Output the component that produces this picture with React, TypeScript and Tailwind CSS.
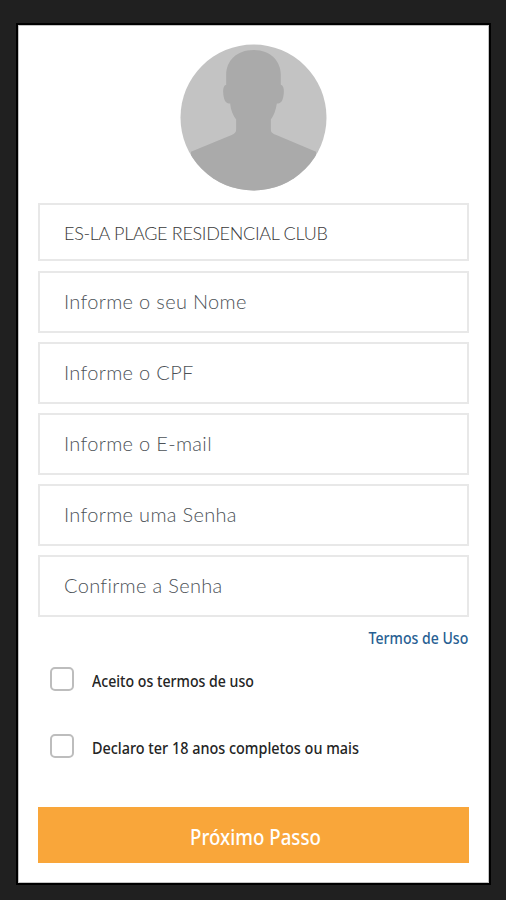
import { useState } from "react";

const fields = [
  { name: "nome", placeholder: "Informe o seu Nome", type: "text" },
  { name: "cpf", placeholder: "Informe o CPF", type: "text" },
  { name: "email", placeholder: "Informe o E-mail", type: "email" },
  { name: "senha", placeholder: "Informe uma Senha", type: "password" },
  { name: "confirmar", placeholder: "Confirme a Senha", type: "password" },
];

function Avatar() {
  return (
    <svg viewBox="0 0 148 148" className="mx-auto block size-[147px]">
      <defs>
        <clipPath id="avatar-circle">
          <circle cx="74" cy="74" r="73.5" />
        </clipPath>
      </defs>
      <g clipPath="url(#avatar-circle)">
        <rect width="148" height="148" fill="#c3c3c3" />
        <path
          d="M74 6C57 6 46.500 17 46.500 31V41C43 42 43 48 44 53C45 58 47 60 50.500 60C51 67 53.500 72 56.500 76V86C56.500 89 55 90 52 91.500L11 108.500V148H137V108.500L97 91.500C93 90 91.500 89 91.500 86V76C94.500 72 96.500 67 97.500 60C101 60 103 58 104 53C105 48 105 42 101.500 41V31C101.500 17 91 6 74 6Z"
          fill="#aaaaaa"
        />
      </g>
    </svg>
  );
}

export default function App() {
  const [accepted, setAccepted] = useState(false);
  const [adult, setAdult] = useState(false);

  return (
    <main className="h-[900px] w-[506px] bg-[#202020] pt-[25px] pl-[18px]">
      <form
        onSubmit={(e) => e.preventDefault()}
        className="h-[858px] w-[471px] border border-[#c4c4c4] bg-white px-[19px] pt-[18px] font-['Lato',sans-serif] outline-2 outline-black"
      >
        <Avatar />

        <div className="mt-3 flex h-[58px] items-center border-2 border-[#e8e8e8] px-6 pt-[3px] text-[18px] font-light text-[#383838]">
          <span className="tracking-[-0.31px] whitespace-nowrap">
            ES-LA PLAGE RESIDENCIAL CLUB
          </span>
        </div>

        <div className="mt-[10px] flex flex-col gap-[9px]">
          {fields.map((field) => (
            <input
              key={field.name}
              type={field.type}
              placeholder={field.placeholder}
              className="h-[62px] w-full border-2 border-[#e8e8e8] px-6 pb-[2px] text-[20px] font-light tracking-[0.32px] outline-none placeholder:text-[#4c5257]"
            />
          ))}
        </div>

        <div className="font-['Noto_Sans',sans-serif]">
          <div className="mt-[9px] flex h-6 items-center justify-end pr-px">
            <a
              href="#termos"
              className="origin-right scale-x-[0.88] text-[16px] font-medium whitespace-nowrap text-[#285f93]"
            >
              Termos de Uso
            </a>
          </div>

          <div className="mt-[17px] ml-[12px] flex h-6 items-center gap-[18px]">
            <input
              type="checkbox"
              id="aceito"
              checked={accepted}
              onChange={(e) => setAccepted(e.target.checked)}
              className="size-6 shrink-0 appearance-none rounded-[5px] border-2 border-[#bdbdbd]"
            />
            <label
              htmlFor="aceito"
              className="origin-left scale-x-[0.883] pt-[3px] text-[16px] font-medium whitespace-nowrap text-[#242424]"
            >
              Aceito os termos de uso
            </label>
          </div>

          <div className="mt-[43px] ml-[12px] flex h-6 items-center gap-[18px]">
            <input
              type="checkbox"
              id="adulto"
              checked={adult}
              onChange={(e) => setAdult(e.target.checked)}
              className="size-6 shrink-0 appearance-none rounded-[5px] border-2 border-[#bdbdbd]"
            />
            <label
              htmlFor="adulto"
              className="origin-left scale-x-[0.9] pt-[3px] text-[16px] font-medium whitespace-nowrap text-[#242424]"
            >
              Declaro ter 18 anos completos ou mais
            </label>
          </div>

          <button
            type="submit"
            className="mt-[49px] flex h-14 w-full items-center justify-center bg-[#f9a63a] pt-[5px] pl-1 text-[21px] font-medium text-white"
          >
            <span className="scale-x-[0.89] whitespace-nowrap">
              Próximo Passo
            </span>
          </button>
        </div>
      </form>
    </main>
  );
}
